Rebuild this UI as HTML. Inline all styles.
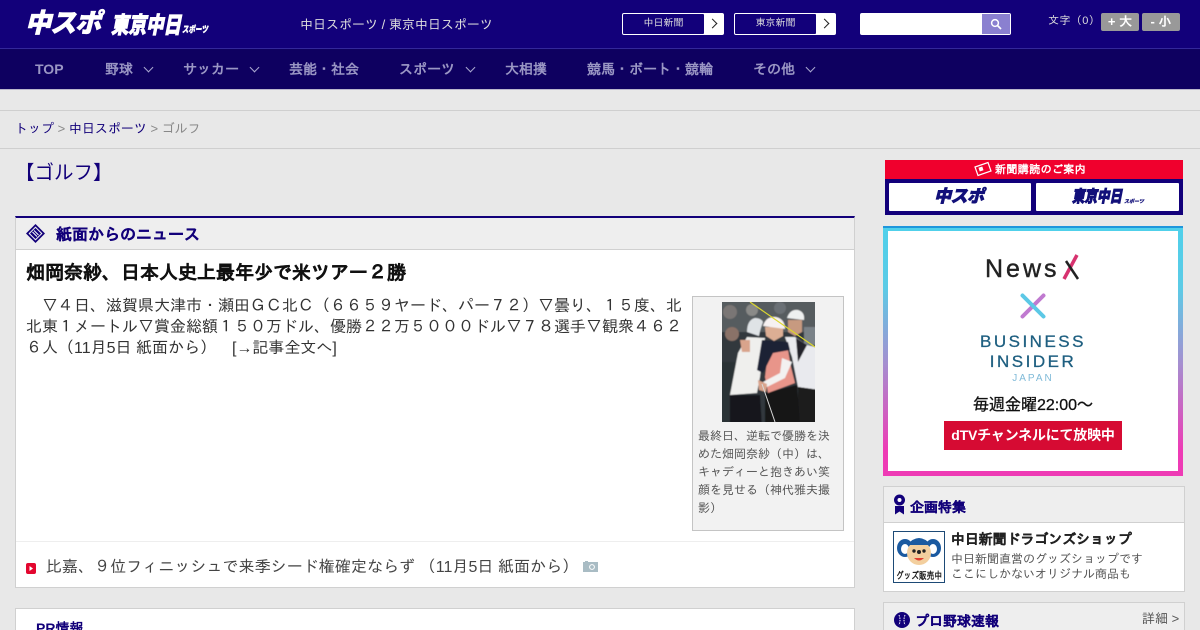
<!DOCTYPE html>
<html lang="ja"><head><meta charset="utf-8"><title>ゴルフ</title>
<style>
*{box-sizing:border-box}
html,body{margin:0;padding:0;width:1200px;height:630px;overflow:hidden;background:#e8e8e8}
#w{width:1200px;height:630px;overflow:hidden;position:relative;background:#e8e8e8;font-family:"Liberation Sans","IPAGothic",sans-serif;color:#333}
.a{position:absolute;white-space:nowrap}
.logo{font-family:"Liberation Sans","Noto Sans CJK JP",sans-serif;font-weight:900;font-style:italic;color:#fff;-webkit-text-stroke:.7px currentColor}
.nav{color:#9a96c4;font-size:14px;font-weight:bold;top:60px;line-height:18px}
.chev{position:absolute;top:64px;width:7px;height:7px;border-right:1.3px solid #aaa8d0;border-bottom:1.3px solid #aaa8d0;transform:rotate(45deg)}
.btn{position:absolute;top:13px;width:102px;height:22px;background:#fff;border:1px solid #fff;border-radius:2px}
.btn span{position:absolute;left:0;top:0;width:81px;height:20px;background:#12007a;color:#ddd;font-size:10px;line-height:20px;text-align:center;border-radius:1px}
.btn i{position:absolute;left:86px;top:6px;width:7px;height:7px;border-top:1px solid #222;border-right:1px solid #222;transform:rotate(45deg)}
.fs{position:absolute;top:13px;height:18px;background:#999;border-radius:2px;color:#fff;font-size:13px;font-weight:bold;line-height:18px;text-align:center}
.panel{position:absolute;background:#fff;border:1px solid #d0d0d0}
.h{-webkit-text-stroke:.25px currentColor}
</style></head><body><div id="w">
<div class="a" style="left:0;top:0;width:1200px;height:49px;background:#12007a;border-bottom:1px solid #33289a"></div>
<div class="a" style="left:0;top:49px;width:1200px;height:41px;background:#0e0060;border-bottom:1px solid #b9b6cc"></div>
<div class="a logo" style="left:25px;top:6px;font-size:26px;line-height:34px;letter-spacing:-1px">中スポ</div>
<div class="a logo" style="left:111px;top:14px;font-size:17.5px;line-height:22px;transform:scaleY(1.3);transform-origin:left center">東京中日</div>
<div class="a logo" style="left:182px;top:25px;font-size:6.5px;line-height:12px;transform:scaleY(1.4);transform-origin:left center;-webkit-text-stroke:.3px #fff">スポーツ</div>
<div class="a" style="left:300px;top:16px;font-size:13px;line-height:18px;color:#ddd">中日スポーツ / 東京中日スポーツ</div>
<div class="btn" style="left:622px"><span>中日新聞</span><i></i></div>
<div class="btn" style="left:734px"><span>東京新聞</span><i></i></div>
<div class="a" style="left:860px;top:13px;width:151px;height:22px;background:#fff;border-radius:2px"></div>
<div class="a" style="left:982px;top:14px;width:28px;height:20px;background:#8a80d0"></div>
<svg class="a" style="left:990px;top:18px" width="12" height="12" viewBox="0 0 12 12"><circle cx="5" cy="5" r="3.4" fill="none" stroke="#fff" stroke-width="1.5"/><path d="M7.5 7.5L11 11" stroke="#fff" stroke-width="1.7"/></svg>
<div class="a" style="left:1048px;top:14px;font-size:11px;line-height:15px;color:#ddd;letter-spacing:.4px">文字（0）</div>
<div class="fs" style="left:1101px;width:38px">+ 大</div>
<div class="fs" style="left:1142px;width:38px">- 小</div>

<div class="a nav" style="left:35px">TOP</div>
<div class="a nav" style="left:105px">野球</div><div class="chev" style="left:145px"></div>
<div class="a nav" style="left:183px">サッカー</div><div class="chev" style="left:251px"></div>
<div class="a nav" style="left:289px">芸能・社会</div>
<div class="a nav" style="left:399px">スポーツ</div><div class="chev" style="left:467px"></div>
<div class="a nav" style="left:505px">大相撲</div>
<div class="a nav" style="left:587px">競馬・ボート・競輪</div>
<div class="a nav" style="left:753px">その他</div><div class="chev" style="left:807px"></div>

<div class="a" style="left:0;top:110px;width:1200px;height:39px;border-top:1px solid #cfcfcf;border-bottom:1px solid #cfcfcf"></div>
<div class="a" style="left:15px;top:120px;font-size:13px;line-height:17px;color:#888"><span style="color:#12007a">トップ</span> &gt; <span style="color:#12007a">中日スポーツ</span> &gt; ゴルフ</div>
<div class="a" style="left:15px;top:160px;font-size:19.5px;line-height:26px;color:#12007a;font-family:'Liberation Sans','Noto Sans CJK JP',sans-serif">【ゴルフ】</div>

<div class="panel" style="left:15px;top:216px;width:840px;height:372px;border-top:2px solid #12007a"></div>
<div class="a" style="left:16px;top:218px;width:838px;height:32px;background:#eeeeee;border-bottom:1px solid #d0d0d0"></div>
<svg class="a" style="left:25px;top:223px" width="21" height="21" viewBox="0 0 21 21"><path d="M10.5 1L20 10.5 10.5 20 1 10.5Z" fill="#12007a"/><path d="M10.5 3.5L17.5 10.5 10.5 17.5 3.5 10.5Z" fill="#eee"/><path d="M10.5 5L16 10.5 10.5 16 5 10.5Z" fill="#12007a"/><path d="M9 7.5L13.5 12M7.5 9L12 13.5" stroke="#fff" stroke-width="1"/></svg>
<div class="a h" style="left:56px;top:225px;font-size:16px;line-height:21px;font-weight:bold;color:#12007a">紙面からのニュース</div>
<div class="a h" style="left:26px;top:261px;font-size:19px;line-height:25px;font-weight:bold;color:#111">畑岡奈紗、日本人史上最年少で米ツアー２勝</div>
<div class="a" style="left:26px;top:296px;width:660px;white-space:normal;font-size:16px;line-height:21px;color:#333">　▽４日、滋賀県大津市・瀬田ＧＣ北Ｃ（６６５９ヤード、パー７２）▽曇り、１５度、北北東１メートル▽賞金総額１５０万ドル、優勝２２万５０００ドル▽７８選手▽観衆４６２６人（11月5日 紙面から）　[→記事全文へ]</div>

<div class="a" style="left:692px;top:296px;width:152px;height:235px;background:#f2f2f2;border:1px solid #c4c4c4"></div>
<svg class="a" style="left:722px;top:302px" width="93" height="120" viewBox="0 0 93 120">
<defs><filter id="b" x="-5%" y="-5%" width="110%" height="110%"><feGaussianBlur stdDeviation=".6"/></filter><clipPath id="c"><rect width="93" height="120"/></clipPath></defs>
<g clip-path="url(#c)"><g filter="url(#b)">
<rect x="-5" y="-5" width="103" height="130" fill="#33383c"/>
<rect x="-5" y="-5" width="103" height="35" fill="#565b5e"/>
<circle cx="8" cy="10" r="7" fill="#7a7674"/><circle cx="30" cy="8" r="6" fill="#8a8a88"/><circle cx="58" cy="6" r="6" fill="#6b7074"/><circle cx="10" cy="32" r="7" fill="#8a7268"/><rect x="82" y="25" width="16" height="18" fill="#7a8288"/>
<rect x="-5" y="60" width="21" height="65" fill="#2a3036"/>
<path d="M8 93H38L40 125H8Z" fill="#17171a"/>
<path d="M25 35L43 36 38 75 35 91 8 93 16 51Z" fill="#efefed"/>
<path d="M63 35L73 35 85 43 98 46 98 88 76 85 70 55Z" fill="#e9eaee"/>
<path d="M74 36L85 43 76 60Z" fill="#22242c"/>
<path d="M76 85L98 88V125H76Z" fill="#1a1a1e"/>
<path d="M43 91L75 83 78 125 43 125Z" fill="#141416"/>
<path d="M46 51L66 48 69 65 73 81 46 91 43 75Z" fill="#e8958a"/>
<path d="M40 38L66 40 68 48 51 51 41 71 35 68Z" fill="#1b2034"/>
<path d="M60 56L70 60 63 76 45 85 41 80 58 71Z" fill="#f3f1f0"/>
<path d="M18 38L28 38 28 50 20 50Z" fill="#d9a48c"/>
<path d="M36 78L45 82 44 90 37 88Z" fill="#d9a48c"/>
<path d="M66 18H80V30L73 34 66 30Z" fill="#c79a80"/>
<path d="M65 16Q68 7 76 8 83 10 82 18Z" fill="#eef0f0"/>
<path d="M43 25H61V34L52 39 44 34Z" fill="#dcae94"/>
<path d="M41 24Q44 14 54 15 63 17 63 27Z" fill="#f6f1f1"/>
<path d="M25 30Q25 18 33 16 39 16 41 20 38 28 37 34Z" fill="#dfe3e6"/>
</g>
<path d="M28 0L93 45" stroke="#dcd72e" stroke-width="1.2"/>
<path d="M40 82L53 120" stroke="#d8d8d8" stroke-width="1"/></g>
</svg>
<div class="a" style="left:698px;top:427px;width:140px;white-space:normal;font-size:12px;line-height:18px;color:#555">最終日、逆転で優勝を決めた畑岡奈紗（中）は、キャディーと抱きあい笑顔を見せる（神代雅夫撮影）</div>

<div class="a" style="left:16px;top:541px;width:838px;height:1px;background:#eee"></div>
<svg class="a" style="left:26px;top:563px" width="10" height="11" viewBox="0 0 10 11"><rect width="10" height="11" rx="2" fill="#e3062f"/><path d="M3.5 3L7 5.5 3.5 8Z" fill="#fff"/></svg>
<div class="a" style="left:46px;top:557px;font-size:16px;line-height:21px;color:#444;letter-spacing:.05px">比嘉、９位フィニッシュで来季シード権確定ならず （11月5日 紙面から）</div>
<svg class="a" style="left:583px;top:560px" width="15" height="12" viewBox="0 0 15 12"><path d="M0 2H2V1H5V2H15V12H0Z" fill="#a9bcc4"/><circle cx="9" cy="7" r="2.4" fill="none" stroke="#fff"/></svg>

<div class="panel" style="left:15px;top:608px;width:840px;height:40px"></div>
<div class="a" style="left:36px;top:619px;font-size:14px;line-height:18px;font-weight:bold;color:#12007a">PR情報</div>

<div class="a" style="left:885px;top:160px;width:298px;height:19px;background:#f0002d"></div>
<div class="a" style="left:885px;top:179px;width:298px;height:36px;background:#12007a"></div>
<svg class="a" style="left:974px;top:161px" width="18" height="17" viewBox="0 0 18 17"><path d="M1 6L14 1.5 17 10 4 14.5Z" fill="#f0002d" stroke="#fff" stroke-width="1.2"/><rect x="5" y="6" width="4" height="4" fill="#fff" transform="rotate(-18 7 8)"/></svg>
<div class="a" style="left:995px;top:163px;font-size:11px;line-height:14px;font-weight:bold;color:#fff;letter-spacing:.4px">新聞購読のご案内</div>
<div class="a" style="left:889px;top:183px;width:142px;height:28px;background:#fff;border-radius:1px"></div>
<div class="a" style="left:1036px;top:183px;width:143px;height:28px;background:#fff;border-radius:1px"></div>
<div class="a logo" style="left:934px;top:186px;font-size:17px;line-height:22px;letter-spacing:-.5px;color:#12107a">中スポ</div>
<div class="a logo" style="left:1072px;top:187px;font-size:12.5px;line-height:21px;color:#12107a;transform:scaleY(1.3);transform-origin:left center">東京中日</div>
<div class="a logo" style="left:1124px;top:198px;font-size:5px;line-height:9px;color:#12107a;-webkit-text-stroke:.2px #12107a">スポーツ</div>

<div class="a" style="left:883px;top:226px;width:300px;height:250px;background:linear-gradient(#4fd0ea 0%,#5ccbe6 25%,#a58fd0 55%,#ee3bb5 90%)"></div>
<div class="a" style="left:883px;top:226px;width:300px;height:2px;background:#1e96dc"></div>
<div class="a" style="left:888px;top:231px;width:290px;height:240px;background:#fff"></div>
<div class="a" style="left:985px;top:254px;font-size:25px;line-height:30px;letter-spacing:3px;color:#222;font-family:'Liberation Sans',sans-serif;-webkit-text-stroke:.4px #222">News</div>
<svg class="a" style="left:1058px;top:253px" width="24" height="28" viewBox="0 0 24 28"><path d="M19 2L6 26" stroke="#d7326f" stroke-width="3.5"/><path d="M8 8L20 26" stroke="#222" stroke-width="2.5"/></svg>
<svg class="a" style="left:1020px;top:293px" width="26" height="26" viewBox="0 0 26 26"><path d="M2.5 23.5L23.5 2.5" stroke="#c07ad0" stroke-width="4" stroke-linecap="round"/><path d="M2.5 2.5L23.5 23.5" stroke="#5cc8e6" stroke-width="4" stroke-linecap="round"/></svg>
<div class="a" style="left:888px;top:332px;width:290px;text-align:center;font-size:17px;line-height:20px;letter-spacing:2.5px;color:#1e5f80;font-family:'Liberation Sans',sans-serif;-webkit-text-stroke:.3px #1e5f80">BUSINESS</div>
<div class="a" style="left:888px;top:352px;width:290px;text-align:center;font-size:17px;line-height:20px;letter-spacing:2.5px;color:#1e5f80;font-family:'Liberation Sans',sans-serif;-webkit-text-stroke:.3px #1e5f80">INSIDER</div>
<div class="a" style="left:888px;top:372px;width:290px;text-align:center;font-size:10px;line-height:13px;letter-spacing:2px;color:#7fbad8">JAPAN</div>
<div class="a" style="left:888px;top:395px;width:290px;text-align:center;font-size:16px;line-height:22px;color:#111;font-family:'Liberation Sans','Noto Sans CJK JP',sans-serif;-webkit-text-stroke:.3px #111">毎週金曜22:00〜</div>
<div class="a" style="left:944px;top:421px;width:178px;height:29px;background:#d60b33;color:#fff;text-align:center;font-size:14px;line-height:29px;font-weight:bold;letter-spacing:-.2px;font-family:'Liberation Sans','Noto Sans CJK JP',sans-serif">dTVチャンネルにて放映中</div>

<div class="panel" style="left:883px;top:486px;width:302px;height:106px"></div>
<div class="a" style="left:884px;top:487px;width:300px;height:36px;background:#eee;border-bottom:1px solid #d0d0d0"></div>
<svg class="a" style="left:893px;top:494px" width="13" height="21" viewBox="0 0 13 21"><circle cx="6.5" cy="6" r="5.5" fill="#12007a"/><circle cx="6.5" cy="6" r="2" fill="#fff"/><path d="M2 12H11V20.5L6.5 17.5 2 20.5Z" fill="#12007a"/></svg>
<div class="a h" style="left:910px;top:498px;font-size:14px;line-height:19px;font-weight:bold;color:#12007a">企画特集</div>
<svg class="a" style="left:893px;top:531px" width="52" height="52" viewBox="0 0 52 52"><rect x=".5" y=".5" width="51" height="51" fill="#fff" stroke="#1d4a76"/><ellipse cx="12" cy="17" rx="8" ry="9" fill="#1b5aa0"/><ellipse cx="40" cy="17" rx="8" ry="9" fill="#1b5aa0"/><ellipse cx="12" cy="18" rx="4" ry="5" fill="#fff"/><ellipse cx="40" cy="18" rx="4" ry="5" fill="#fff"/><ellipse cx="26" cy="22" rx="12" ry="12" fill="#f3cf9e"/><path d="M14 14Q26 0 38 14Z" fill="#1b5aa0"/><circle cx="21" cy="20" r="1.7" fill="#222"/><circle cx="31" cy="20" r="1.7" fill="#222"/><circle cx="26" cy="21" r="2" fill="#222"/><path d="M21 27Q26 32 31 27Z" fill="#e04030"/><text x="26" y="48" font-size="10" font-weight="bold" text-anchor="middle" fill="#222" textLength="46" lengthAdjust="spacingAndGlyphs">グッズ販売中</text></svg>
<div class="a h" style="left:951px;top:530px;font-size:14px;line-height:19px;font-weight:bold;color:#222;letter-spacing:-.1px">中日新聞ドラゴンズショップ</div>
<div class="a" style="left:951px;top:552px;font-size:12px;line-height:15px;color:#555">中日新聞直営のグッズショップです</div>
<div class="a" style="left:951px;top:567px;font-size:12px;line-height:15px;color:#555">ここにしかないオリジナル商品も</div>

<div class="panel" style="left:883px;top:602px;width:302px;height:40px;background:#eee"></div>
<svg class="a" style="left:894px;top:612px" width="16" height="16" viewBox="0 0 16 16"><circle cx="8" cy="8" r="8" fill="#12007a"/><path d="M5 3Q7 8 5 13M11 3Q9 8 11 13" stroke="#fff" fill="none" stroke-dasharray="1.5 1"/></svg>
<div class="a h" style="left:915px;top:612px;font-size:14px;line-height:19px;font-weight:bold;color:#12007a">プロ野球速報</div>
<div class="a" style="left:1142px;top:610px;font-size:13px;line-height:17px;color:#555">詳細 &gt;</div>
</div></body></html>
